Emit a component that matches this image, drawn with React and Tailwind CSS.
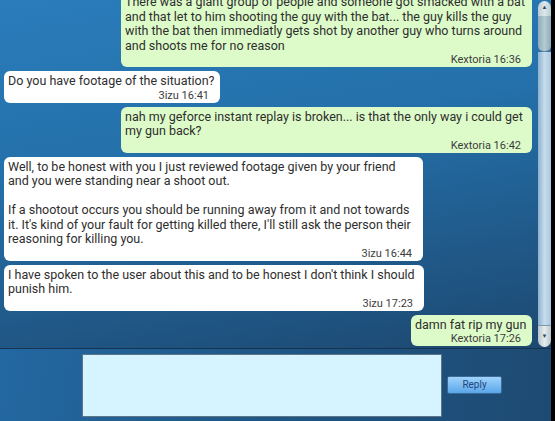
const MESSAGES = [
  {
    mine: true,
    w: "w-[411px]",
    lines: [
      "There was a giant group of people and someone got smacked with a bat",
      "and that let to him shooting the guy with the bat... the guy kills the guy",
      "with the bat then immediatly gets shot by another guy who turns around",
      "and shoots me for no reason",
    ],
    meta: "Kextoria 16:36",
  },
  { mine: false, w: "w-[216px]", lines: ["Do you have footage of the situation?"], meta: "3izu 16:41" },
  {
    mine: true,
    w: "w-[411px]",
    lines: ["nah my geforce instant replay is broken... is that the only way i could get", "my gun back?"],
    meta: "Kextoria 16:42",
  },
  {
    mine: false,
    w: "w-[419px]",
    lines: [
      "Well, to be honest with you I just reviewed footage given by your friend",
      "and you were standing near a shoot out.",
      "",
      "If a shootout occurs you should be running away from it and not towards",
      "it. It's kind of your fault for getting killed there, I'll still ask the person their",
      "reasoning for killing you.",
    ],
    meta: "3izu 16:44",
  },
  {
    mine: false,
    w: "w-[420px]",
    lines: ["I have spoken to the user about this and to be honest I don't think I should", "punish him."],
    meta: "3izu 17:23",
  },
  { mine: true, w: "w-[121px]", lines: ["damn fat rip my gun"], meta: "Kextoria 17:26" },
];

function Bubble({ m }) {
  return (
    <div
      className={`${m.w} shrink-0 rounded-[6px] pl-[4px] pr-[3px] pt-[3px] ${
        m.mine ? "self-end bg-[#ddfbc9]" : "self-start bg-white"
      }`}
    >
      {m.lines.map((l, i) => (
        <div key={i} className="whitespace-nowrap text-[12.5px] leading-[14.5px] text-[#2e2e2e] h-[14.5px]">
          {l}
        </div>
      ))}
      <div className="text-right pr-[8px] text-[11px] leading-[14px] h-[14px] text-[#3c3c3c]">{m.meta}</div>
    </div>
  );
}

function Scrollbar() {
  return (
    <div className="w-[13px] h-full flex flex-col py-[1px]">
      <div className="h-[15px] rounded-t-full bg-[linear-gradient(90deg,#b8cdd4,#dde8ea,#b8cdd4)] flex items-start justify-center pt-[3px]">
        <span className="text-[6px] leading-[6px] text-[#3a4a55]">▲</span>
      </div>
      <div className="h-[36px] rounded-b-[6px] bg-[linear-gradient(90deg,#8fabb9,#b5cad3,#8fabb9)] border-b border-[#6d8a9a]" />
      <div className="flex-1 bg-[linear-gradient(90deg,#8eb0cc,#c6ddef,#a9c6de)]" />
      <div className="h-[22px] rounded-b-full bg-[linear-gradient(90deg,#b8c6cc,#e6ecee,#b8c6cc)] border-t border-[#7f99a8] flex items-start justify-center pt-[7px]">
        <span className="text-[6px] leading-[6px] text-[#3a4a55]">▼</span>
      </div>
    </div>
  );
}

export default function App() {
  return (
    <div className="w-[555px] h-[421px] flex bg-black overflow-hidden" style={{ fontFamily: "Roboto, 'Noto Sans', sans-serif" }}>
      <div className="w-[551px] h-full flex flex-col">
        <div className="h-[348px] shrink-0 flex bg-[linear-gradient(170deg,#2a7dbb_0%,#2470aa_40%,#1d4870_100%)]">
          <div className="flex-1 overflow-hidden flex flex-col justify-end gap-[4px] pl-[4px] pr-[6px] pb-[2px]">
            {MESSAGES.map((m, i) => (
              <Bubble key={i} m={m} />
            ))}
          </div>
          <Scrollbar />
        </div>
        <div className="flex-1 border-t border-[#16334f] bg-[linear-gradient(100deg,#2368a2_0%,#1f5685_50%,#1d4a72_100%)] flex items-start pt-[5px]">
          <div className="ml-[82px] w-[360px] h-[63px] bg-[#d5f4ff] border border-[#5d7585]" />
          <button className="ml-[5px] mt-[22px] w-[55px] h-[18px] rounded-[2px] border border-[#3c6a98] bg-[linear-gradient(180deg,#9fd3fb,#5aa6ea)] text-[10px] leading-[16px] text-[#22487c]">
            Reply
          </button>
        </div>
      </div>
    </div>
  );
}
